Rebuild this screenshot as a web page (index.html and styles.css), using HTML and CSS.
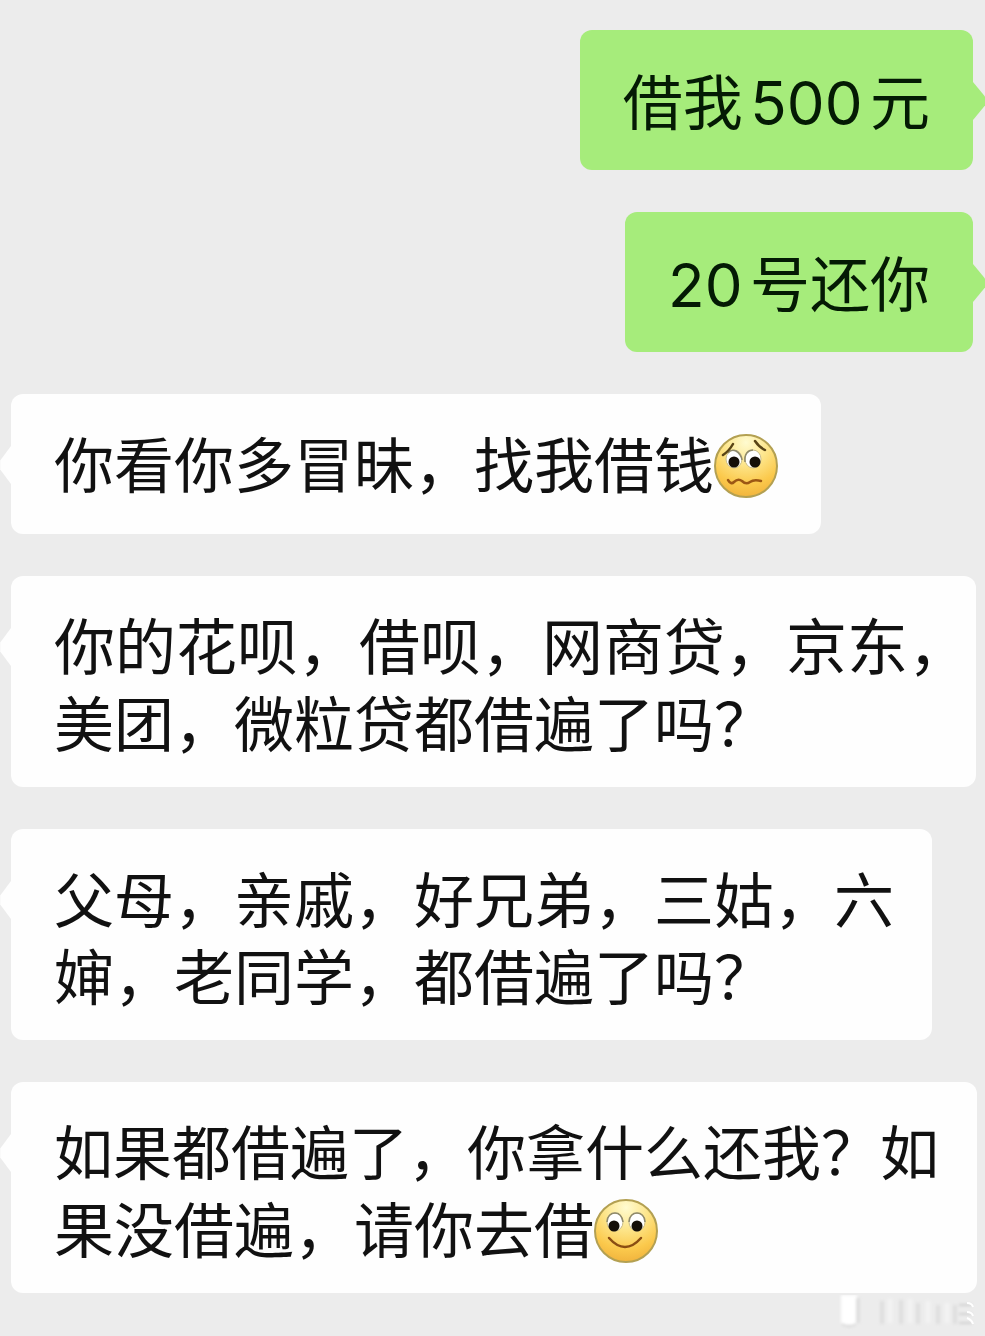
FILE: index.html
```html
<!DOCTYPE html>
<html lang="zh-CN">
<head>
  <meta charset="UTF-8">
  <meta name="viewport" content="width=device-width, initial-scale=1.0">
  <title>聊天</title>
  <link rel="stylesheet" href="styles.css">
</head>
<body>
  <main class="chat">
    <!-- 我发的消息 -->
    <p class="bubble sent">借我500元</p>
    <p class="bubble sent">20号还你</p>

    <!-- 对方的消息 -->
    <p class="bubble received"><span class="line">你看你多冒昧，找我借钱<svg class="emoji" viewBox="0 0 64 64" role="img" aria-label="难过">
        <defs>
          <radialGradient id="face" cx="50%" cy="12%" r="90%">
            <stop offset="0" stop-color="#fffbd0"/>
            <stop offset="0.4" stop-color="#fde58a"/>
            <stop offset="0.75" stop-color="#fbc94c"/>
            <stop offset="1" stop-color="#f0b23c"/>
          </radialGradient>
        </defs>
        <circle cx="32" cy="32" r="31" fill="url(#face)" stroke="#b3a052" stroke-width="2"/>
        <ellipse cx="20" cy="25" rx="8" ry="9" fill="#fff" stroke="#c9bd8c"/>
        <ellipse cx="39" cy="25" rx="8" ry="9" fill="#fff" stroke="#c9bd8c"/>
        <path d="M14 19Q17 15 22 17Q27 20 28 26M31 28C30 20 34 16 39 16" fill="none" stroke="#8f8a6c" stroke-width="1.5"/>
        <circle cx="20" cy="28" r="5.5" fill="#150f08"/>
        <circle cx="41" cy="28" r="5.5" fill="#150f08"/>
        <path d="M9 21Q15 17 19 10M41 7Q45 13 51 16" fill="none" stroke="#594416" stroke-width="2.5" stroke-linecap="round"/>
        <path d="M14 46Q17 51 20 48Q24 44 28 47Q32 51 36 48Q40 45 47 47" fill="none" stroke="#9c5714" stroke-width="2.5" stroke-linecap="round"/>
      </svg></span></p>
    <p class="bubble received hanging"><span class="line loose">你的花呗，借呗，网商贷，京东，</span><span class="line">美团，微粒贷都借遍了吗？</span></p>
    <p class="bubble received"><span class="line">父母，亲戚，好兄弟，三姑，六</span><span class="line">婶，老同学，都借遍了吗？</span></p>
    <p class="bubble received"><span class="line tight">如果都借遍了，你拿什么还我？如</span><span class="line">果没借遍，请你去借<svg class="emoji" viewBox="0 0 64 64" role="img" aria-label="微笑">
        <circle cx="32" cy="32" r="31" fill="url(#face)" stroke="#b3a052" stroke-width="2"/>
        <ellipse cx="21" cy="23" rx="8" ry="9" fill="#fff" stroke="#c9bd8c"/>
        <ellipse cx="43" cy="23" rx="8" ry="9" fill="#fff" stroke="#c9bd8c"/>
        <path d="M13 23C13 17 17 14 21 14S28 17 29 23M35 23C35 17 39 14 43 14S51 17 51 23" fill="none" stroke="#8f8a6c" stroke-width="1.5"/>
        <circle cx="20" cy="27" r="5.5" fill="#150f08"/>
        <circle cx="43" cy="27" r="5.5" fill="#150f08"/>
        <path d="M15 39Q31 57 47 39" fill="none" stroke="#8a4d12" stroke-width="2.5" stroke-linecap="round"/>
      </svg></span></p>
  </main>

  <!-- 右下角水印 -->
  <svg class="watermark" viewBox="0 0 146 41" aria-hidden="true">
    <defs>
      <filter id="haze"><feGaussianBlur stdDeviation="1.5"/></filter>
    </defs>
    <g filter="url(#haze)">
      <path d="M2 0H18V28Q10 33 2 28Z" fill="#fff"/>
      <path d="M3 29Q10 33 17 29" fill="none" stroke="#b5b5b5"/>
      <path d="M19 3V28M43 6V29M62 5V29M79 8V29M99 10V29M116 10V29" stroke="#dedede" stroke-width="4"/>
      <path d="M51 4V28M71 4V28M89 6V28M108 8V28" stroke="#f3f3f3" stroke-width="5"/>
      <path d="M120 10H133M120 19H133M120 28H133" stroke="#cfcfcf" stroke-width="2"/>
    </g>
    <path d="M128 8Q133 8 134 12M128 17Q133 17 134 21M128 23Q133 25 134 29" fill="none" stroke="#fff" stroke-width="2"/>
  </svg>
</body>
</html>
```
FILE: styles.css
```css
/* 全局样式 */
* {
  box-sizing: border-box;
}

body {
  position: relative;
  margin: 0;
  min-height: 100vh;
  background: #ececec;
  color: #111;
  font-family: "Noto Sans CJK SC", sans-serif;
  font-size: 60px;
  line-height: 77px;
}

.chat {
  display: flex;
  flex-direction: column;
  align-items: flex-start;
  gap: 42px;
  padding: 30px 12px 40px 11px;
}

.bubble {
  position: relative;
  min-height: 140px;
  margin: 0;
  padding: 35px 43px 24px;
  border-radius: 12px;
}

.sent {
  align-self: flex-end;
  background: #a6ec7b;
  color: #041a04;
  font-family: Inter, "Noto Sans CJK SC", sans-serif;
  text-autospace: normal;
}

.received {
  padding: 29px 38px 28px 43px;
  background: #fefefe;
}

/* 行末逗号伸进右边距 */
.hanging {
  padding-right: 7px;
}

/* 气泡小尖角 */
.bubble::after {
  content: "";
  position: absolute;
  top: 52px;
  width: 12px;
  height: 38px;
}

.sent::after {
  left: 100%;
  background: #a6ec7b;
  clip-path: polygon(0 0, 100% 38%, 100% 62%, 0 100%);
}

.received::after {
  right: 100%;
  background: #fefefe;
  clip-path: polygon(100% 0, 10% 38%, 10% 62%, 100% 100%);
}

.line {
  display: block;
  height: 77px;
  white-space: nowrap;
}

.loose {
  font-size: 61px;
}

.tight {
  font-size: 59px;
}

.emoji {
  width: 64px;
  height: 64px;
  margin-right: 5px;
  vertical-align: -10px;
}

.watermark {
  position: absolute;
  right: 0;
  bottom: 0;
  width: 146px;
  height: 41px;
}
```
